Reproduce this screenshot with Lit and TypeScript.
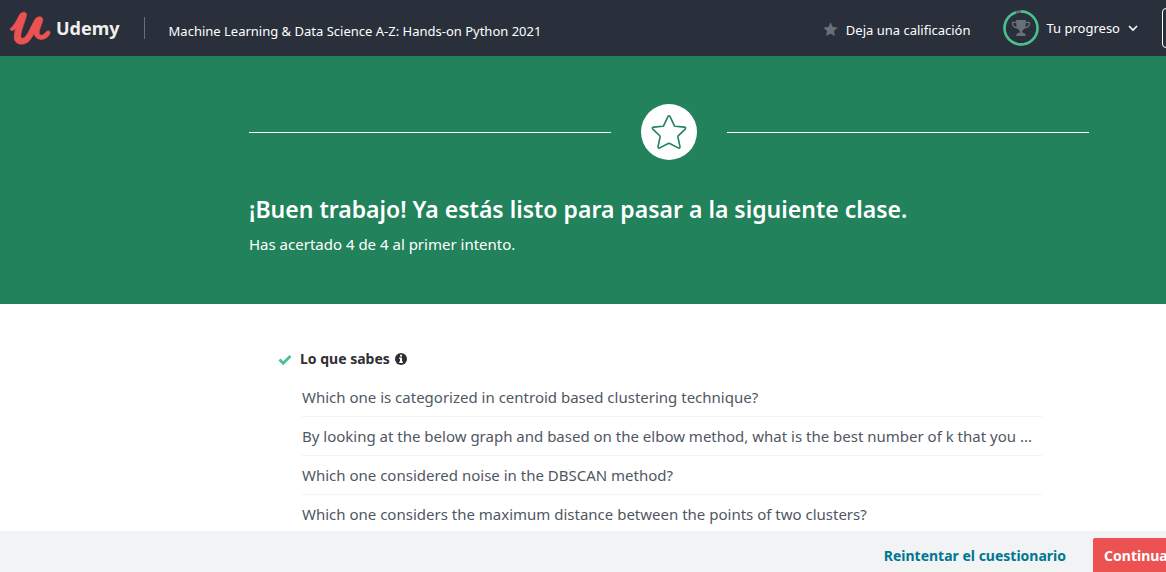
import { LitElement, html, css } from "lit";
import { customElement, state } from "lit/decorators.js";

@customElement("course-header")
class CourseHeader extends LitElement {
  static styles = css`
    :host { display: block; flex: none; }
    header {
      display: flex;
      align-items: center;
      height: 56px;
      overflow: hidden;
      background: #29303b;
      color: #fff;
      font-size: 13px;
      line-height: 20px;
      white-space: nowrap;
    }
    a { color: inherit; text-decoration: none; }
    .logo { display: flex; align-items: center; flex: none; padding-left: 9px; }
    .mark { display: block; flex: none; width: 43px; height: 36px; }
    .name { margin-left: 4px; color: #f0efeb; font-size: 18px; font-weight: 700; line-height: 20px; }
    .divider { flex: none; width: 1px; height: 22px; margin: 0 24px; background: #686f7a; }
    .course { flex: 1 1 auto; min-width: 0; overflow: hidden; text-overflow: ellipsis; padding-top: 6px; }
    button {
      display: flex;
      align-items: center;
      flex: none;
      padding: 0;
      border: 0;
      background: none;
      color: inherit;
      font: inherit;
    }
    .rate { gap: 8px; padding-top: 4px; }
    .rate svg { width: 15px; height: 15px; margin-top: -2px; }
    .progress { gap: 8px; margin-left: 32px; }
    .ring { width: 36px; height: 36px; }
    .chevron { width: 10px; height: 10px; }
    .share {
      justify-content: center;
      width: 96px;
      height: 40px;
      margin: 0 -92px 0 24px;
      border: 1px solid #fff;
      border-radius: 4px;
    }
  `;

  render() {
    return html`
      <header>
        <a class="logo" href="#" aria-label="Udemy">
          <svg class="mark" viewBox="0 0 43 36" aria-hidden="true">
            <path d="M1.500 18.200C5 16 8 9.500 10.500 4.800C12.300 1.500 17.500 1 17.500 4.800C17.300 9 11.800 20.500 11.800 26C12 30 15.500 28.500 18.300 24C21.500 18.500 23.800 12.800 26.300 9C28.500 5.600 33.800 6 33.800 9.700C33.500 13.500 29.500 20 30.300 23.500C31.500 27 35 24.500 37.500 21.500C39.500 19.800 41.500 21.200 41 23.500C39 28 34.500 29.800 31.500 29.400C27.800 29 25.500 26.500 25 23.500C22 29.500 18.500 34.300 12.500 34.200C6.500 34 4.800 30 5.300 25.500C5.500 23 6 21 6.700 18.800C5.200 20 4 20.700 2.500 20.500C1.300 20.200.8 19 1.500 18.200Z" fill="#ec5252" stroke="#ec5252" stroke-width=".6"/>
          </svg>
          <span class="name">Udemy</span>
        </a>
        <span class="divider"></span>
        <a class="course" href="#">Machine Learning &amp; Data Science A-Z: Hands-on Python 2021</a>
        <button class="rate" type="button">
          <svg viewBox="0 0 16 16" aria-hidden="true"><path fill="#686f7a" d="M8 .3l2.300 4.900 5.400.7-4 3.700 1 5.400L8 12.400 3.300 15l1-5.400-4-3.700 5.400-.7z"/></svg>
          <span>Deja una calificación</span>
        </button>
        <button class="progress" type="button">
          <svg class="ring" viewBox="0 0 36 36" aria-hidden="true">
            <circle cx="18" cy="18" r="16.500" fill="none" stroke="#686f7a" stroke-width="2.400"/>
            <circle cx="18" cy="18" r="16.500" fill="none" stroke="#46c28e" stroke-width="2.400" pathLength="100" stroke-dasharray="95 5" transform="rotate(-90 18 18)"/>
            <path fill="#686f7a" d="M13.200 10h9.600v1.800H27v2.200c0 2.500-2.500 4.200-5.500 4.600-.7 1-1.500 1.500-2.100 1.900v2.200c1.900.1 3.200.8 3.200 2.300v1H13.400v-1c0-1.500 1.300-2.200 3.200-2.300v-2.200c-.6-.4-1.400-.9-2.100-1.900-3-.4-5.500-2.100-5.500-4.600v-2.200h4.200zm0 3h-2.900v1c0 1.300 1.300 2.400 3.300 2.900-.3-1.200-.4-2.400-.4-3.900zm9.600 0c0 1.500-.1 2.700-.4 3.900 2-.5 3.300-1.600 3.300-2.900v-1z"/>
          </svg>
          <span>Tu progreso</span>
          <svg class="chevron" viewBox="0 0 10 10" aria-hidden="true"><path d="M1 3l4 4 4-4" fill="none" stroke="#fff" stroke-width="1.600"/></svg>
        </button>
        <button class="share" type="button" aria-label="Compartir"></button>
      </header>
    `;
  }
}

@customElement("quiz-banner")
class QuizBanner extends LitElement {
  static styles = css`
    :host { display: block; flex: none; background: #21825b; color: #fff; }
    .inner { box-sizing: border-box; max-width: 1012px; margin: 0 auto; padding: 48px 0 48px 172px; }
    .badge { display: flex; align-items: center; gap: 30px; }
    .rule { flex: 1; height: 1px; background: #fff; }
    .disc {
      display: flex;
      align-items: center;
      justify-content: center;
      width: 56px;
      height: 56px;
      border-radius: 50%;
      background: #fff;
    }
    .disc svg { width: 36px; height: 36px; }
    h1 { margin: 32px 0 0; font-size: 23px; font-weight: 600; line-height: 34px; }
    p { margin: 6px 0 0; font-size: 15px; line-height: 24px; }
  `;

  render() {
    return html`
      <div class="inner">
        <div class="badge">
          <span class="rule"></span>
          <span class="disc">
            <svg viewBox="0 0 36 36" aria-hidden="true">
              <path d="M16.800 2.800q1.200-2 2.400 0l4 8.600q.3.700 1 .8l9.200.9q2 .4.800 2l-7 6.700q-.5.500-.3 1.200l2.100 9.600q.2 2-1.700 1.300l-8.600-4.400q-.7-.3-1.400 0l-8.600 4.400q-1.900.700-1.700-1.300L9.100 23q.2-.7-.3-1.200l-7-6.700q-1.200-1.600.8-2l9.200-.9q.7-.1 1-.8z" fill="none" stroke="#21825b" stroke-width="1.600" stroke-linejoin="round"/>
            </svg>
          </span>
          <span class="rule"></span>
        </div>
        <h1>¡Buen trabajo! Ya estás listo para pasar a la siguiente clase.</h1>
        <p>Has acertado 4 de 4 al primer intento.</p>
      </div>
    `;
  }
}

@customElement("app-root")
class AppRoot extends LitElement {
  static styles = css`
    :host {
      display: flex;
      flex-direction: column;
      height: 100vh;
      overflow: hidden;
      background: #fff;
      font-family: "Noto Sans", "Open Sans", sans-serif;
    }
    main { flex: 1; min-height: 0; overflow: hidden; }
    .results { box-sizing: border-box; max-width: 1012px; margin: 0 auto; padding: 43px 47px 0 201px; }
    h2 {
      display: flex;
      align-items: center;
      margin: 0;
      color: #2f2f33;
      font-size: 14px;
      font-weight: 700;
      line-height: 24px;
    }
    .check { width: 14px; height: 14px; margin-right: 8px; }
    .info { width: 12px; height: 12px; margin-left: 5px; }
    ul { margin: 7px 0 0 24px; padding: 0; list-style: none; }
    li {
      padding: 7px 0;
      border-bottom: 1px solid #f2f3f5;
      color: #505763;
      font-size: 15px;
      line-height: 24px;
      overflow: hidden;
      text-overflow: ellipsis;
      white-space: nowrap;
    }
    footer {
      display: flex;
      flex: none;
      justify-content: flex-end;
      align-items: flex-start;
      box-sizing: border-box;
      height: 41px;
      padding-top: 7px;
      overflow: hidden;
      background: #f2f3f5;
    }
    footer button {
      flex: none;
      height: 36px;
      padding: 0 11px;
      border: 0;
      border-radius: 2px;
      font: 700 14px/34px "Noto Sans", "Open Sans", sans-serif;
      white-space: nowrap;
    }
    .retry { margin-right: 16px; background: none; color: #007791; }
    .next { margin-right: -19px; background: #ec5252; color: #fff; }
  `;

  @state() questions = [
    "Which one is categorized in centroid based clustering technique?",
    "By looking at the below graph and based on the elbow method, what is the best number of k that you ...",
    "Which one considered noise in the DBSCAN method?",
    "Which one considers the maximum distance between the points of two clusters?",
  ];

  render() {
    return html`
      <course-header></course-header>
      <main>
        <quiz-banner></quiz-banner>
        <section class="results">
          <h2>
            <svg class="check" viewBox="0 0 14 14" aria-hidden="true"><path d="M1.500 7.500l3.700 3.700L12.500 4" fill="none" stroke="#46c28e" stroke-width="2.800"/></svg>
            <span>Lo que sabes</span>
            <svg class="info" viewBox="0 0 12 12" aria-hidden="true">
              <circle cx="6" cy="6" r="6" fill="#2f2f33"/>
              <path fill="#fff" d="M5 1.700h2v1.800H5zM4.200 4.600H7v3.900h.9V10H4.200V8.500H5V6h-.8z"/>
            </svg>
          </h2>
          <ul>
            ${this.questions.map((q) => html`<li>${q}</li>`)}
          </ul>
        </section>
      </main>
      <footer>
        <button class="retry" type="button">Reintentar el cuestionario</button>
        <button class="next" type="button">Continuar</button>
      </footer>
    `;
  }
}
